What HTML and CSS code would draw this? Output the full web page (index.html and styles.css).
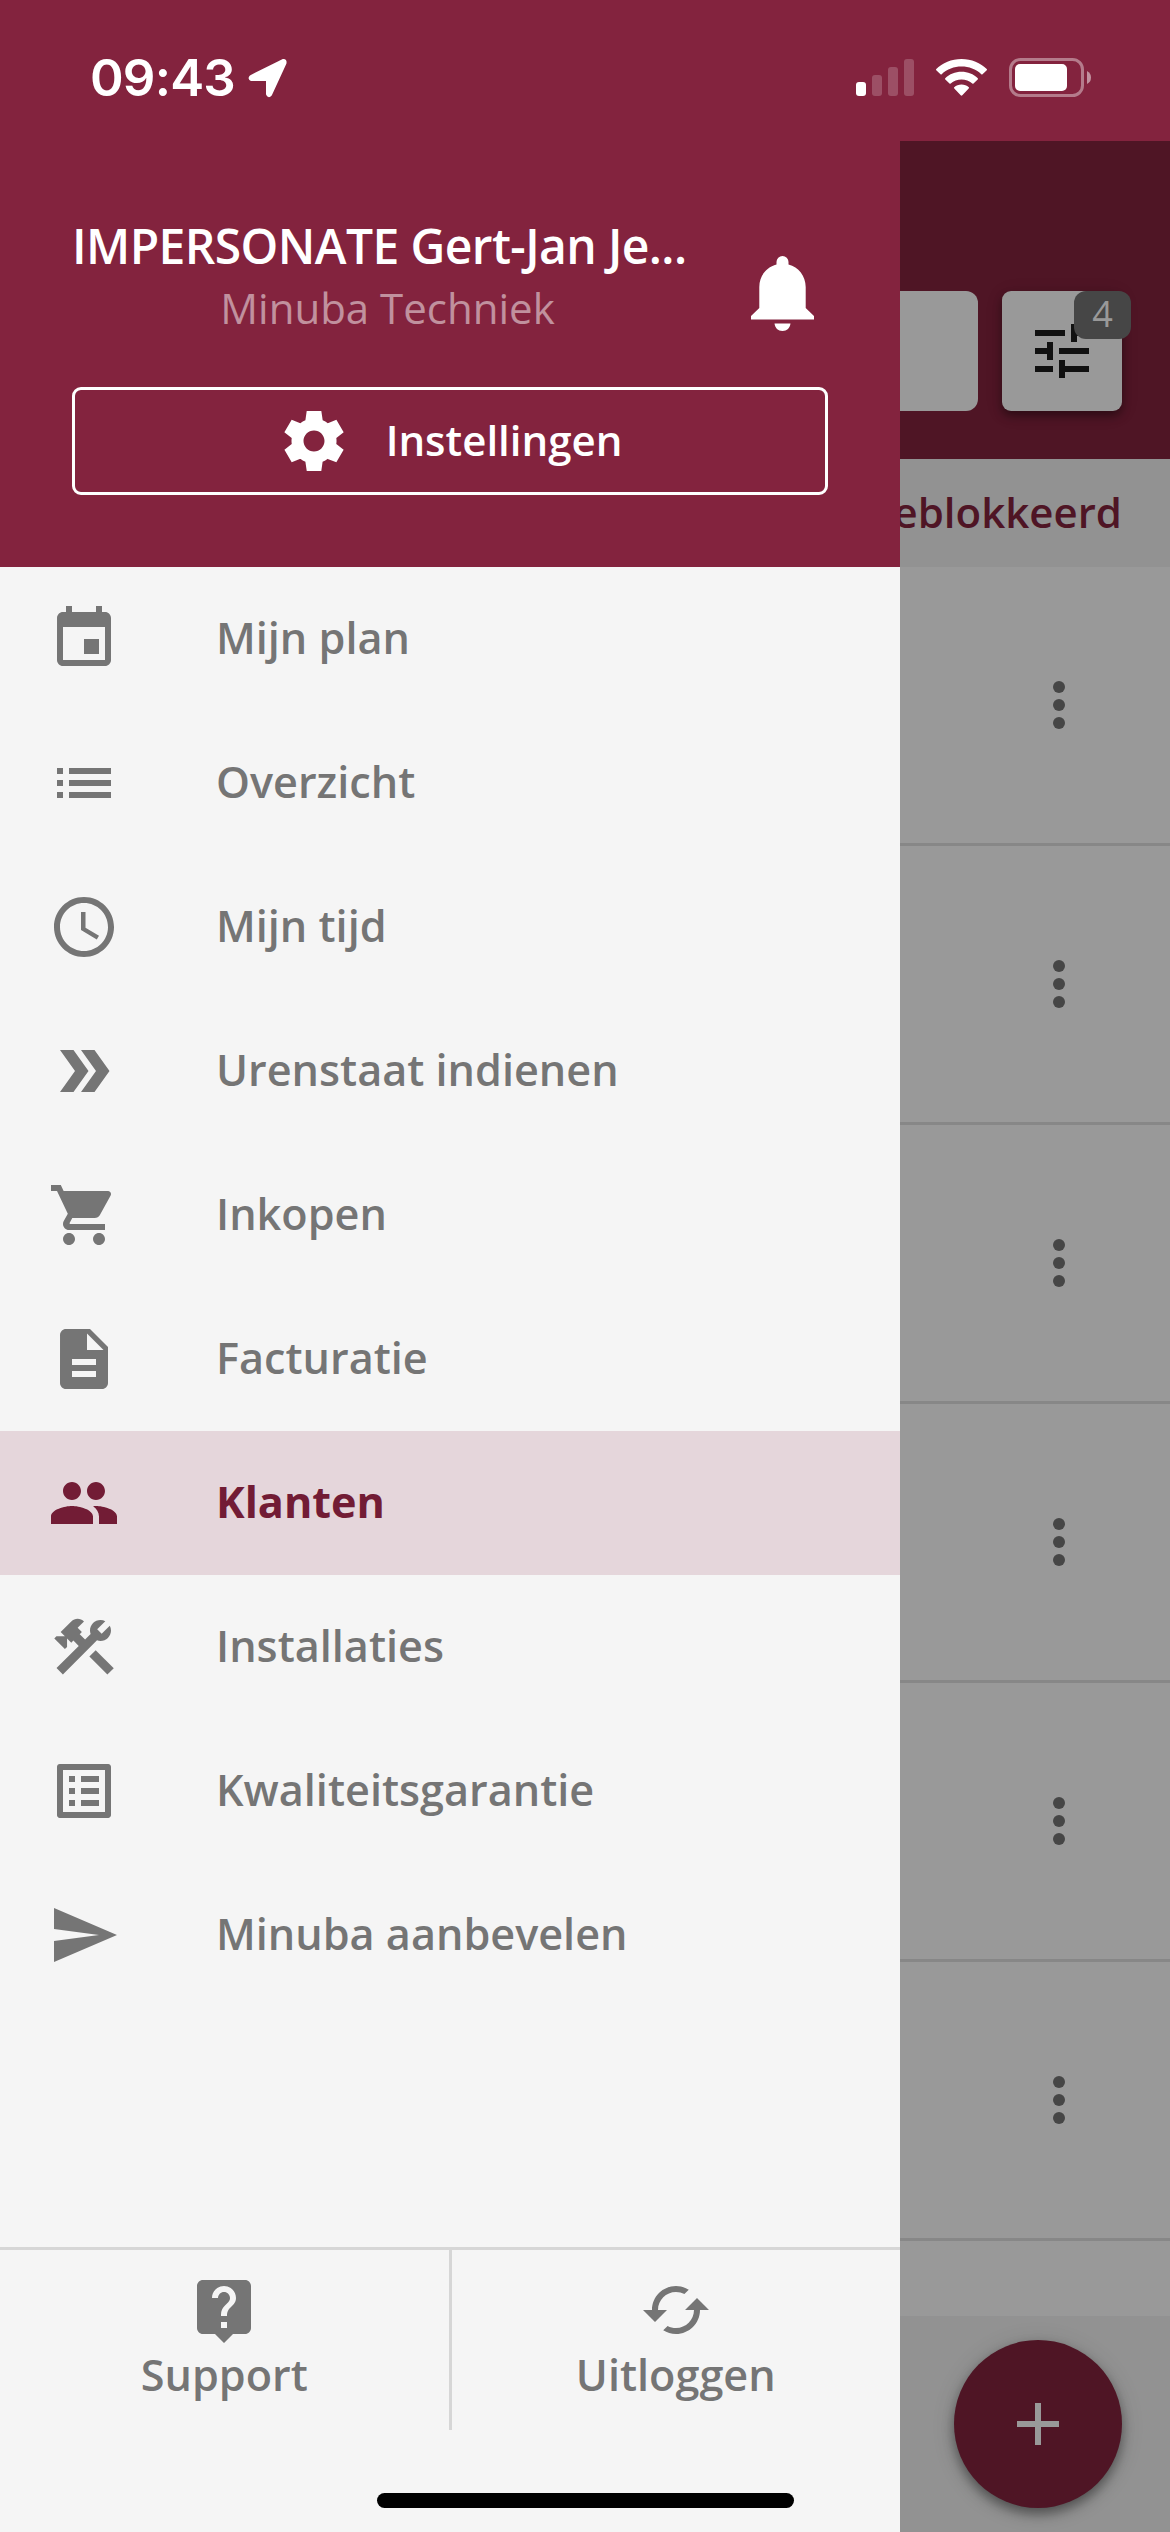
FILE: index.html
```html
<!DOCTYPE html>
<html lang="nl">
<head>
<meta charset="utf-8">
<title>Minuba – Klanten</title>
<link rel="stylesheet" href="styles.css">
</head>
<body>
<div class="screen">
  <header class="status">
    <div class="status-left">
      <span class="clock">09:43</span>
      <svg class="location" viewBox="0 0 39 40"><path d="M3 18.5 35 2.5Q37.5 2 37 5L22.5 36.500Q20.500 39 19.500 36V21.500H3.500Q1 20.500 3 18.500Z" fill="#fff" stroke="#fff" stroke-width="3" stroke-linejoin="round"/></svg>
    </div>
    <div class="status-right">
      <svg class="signal" viewBox="0 0 58 37" fill="#fff"><rect x="0" y="23" width="10" height="14" rx="3"/><g opacity=".2"><rect x="16" y="16" width="10" height="21" rx="3"/><rect x="32" y="8" width="10" height="29" rx="3"/><rect x="48" y="0" width="10" height="37" rx="3"/></g></svg>
      <svg class="wifi" viewBox="0 0 51 37" fill="#fff"><path d="M25.500 0C35.500 0 44.500 3.800 51 10.200Q51 11 50.500 11.500L46.500 15.300Q45.800 15.700 45.300 15.200C39.800 10.200 33 7.600 25.500 7.600S11.200 10.200 5.700 15.200Q5.200 15.700 4.500 15.300L.5 11.500Q0 11 0 10.200C6.500 3.800 15.500 0 25.500 0Z"/><path d="M25.500 12.800C31.800 12.800 37.500 15.200 41.800 19.200Q42.200 19.900 41.700 20.400L37.500 24.500Q36.900 24.900 36.300 24.400C33.300 21.800 29.600 20.400 25.500 20.400S17.700 21.800 14.700 24.400Q14.100 24.900 13.500 24.500L9.300 20.400Q8.800 19.900 9.200 19.200C13.500 15.200 19.200 12.800 25.500 12.800Z"/><path d="M25.500 25.600C28.300 25.600 30.800 26.600 32.800 28.200Q33.300 28.900 32.700 29.500L26.300 36.300Q25.500 37.100 24.700 36.300L18.300 29.500Q17.700 28.900 18.200 28.200C20.200 26.600 22.700 25.600 25.500 25.600Z"/></svg>
      <svg class="battery" viewBox="0 0 82 39" fill="#fff"><rect x="1.500" y="1.500" width="72" height="36" rx="10" fill="none" stroke="#fff" stroke-width="3" opacity=".4"/><rect x="6" y="6" width="52" height="27" rx="5"/><path d="M78 13Q82 15 82 19.500T78 26Z" opacity=".5"/></svg>
    </div>
  </header>

  <div class="body">
    <aside class="drawer">
      <div class="profile">
        <div class="profile-row">
          <div class="profile-names">
            <div class="user">IMPERSONATE Gert-Jan Je...</div>
            <div class="company">Minuba Techniek</div>
          </div>
          <svg class="bell" viewBox="0 0 63 75" fill="#fff"><path d="M25.500 8.500V6a6 6 0 0 1 12 0V8.500C47.500 11 54.700 20 54.700 31V52L63 60V63.500H0V60L8.300 52V31C8.300 20 15.500 11 25.500 8.500ZM23.500 67.500H39.500C39 72 36 75 31.500 75S24 72 23.500 67.500Z"/></svg>
        </div>
        <div class="settings">
          <svg class="icon" viewBox="0 0 24 24"><path d="M19.440 12.990l-.01.020c.04-.33.08-.67.08-1.010 0-.34-.03-.66-.07-.99l.01.020 2.440-1.920-2.430-4.220-2.870 1.160.01.010c-.52-.4-1.090-.74-1.710-1h.01L14.440 2H9.570l-.44 3.070h.01c-.62.26-1.190.6-1.710 1l.01-.01-2.880-1.170-2.440 4.220 2.440 1.920.01-.02c-.04.33-.07.65-.07.99 0 .34.03.68.08 1.010l-.01-.02-2.100 1.650-.33.26 2.430 4.200 2.880-1.150-.02-.04c.53.41 1.100.75 1.730 1.010h-.03L9.580 22h4.850s.03-.18.06-.42l.38-2.650h-.01c.62-.26 1.200-.6 1.730-1.010l-.02.040 2.880 1.150 2.430-4.200s-.14-.12-.33-.26l-2.110-1.660zM12 15.500c-1.930 0-3.500-1.570-3.500-3.500s1.570-3.500 3.500-3.500 3.500 1.570 3.500 3.500-1.570 3.500-3.500 3.500z"/></svg>
          <span class="settings-label">Instellingen</span>
        </div>
      </div>

      <nav class="menu">
        <div class="item"><svg class="icon" viewBox="0 0 24 24"><path d="M17 12h-5v5h5v-5zM16 1v2H8V1H6v2H5c-1.110 0-1.990.9-1.990 2L3 19c0 1.100.89 2 2 2h14c1.100 0 2-.9 2-2V5c0-1.100-.9-2-2-2h-1V1h-2zm3 18H5V8h14v11z"/></svg><span>Mijn plan</span></div>
        <div class="item"><svg class="icon" viewBox="0 0 24 24"><path d="M3 13h2v-2H3v2zm0 4h2v-2H3v2zm0-8h2V7H3v2zm4 4h14v-2H7v2zm0 4h14v-2H7v2zM7 7v2h14V7H7z"/></svg><span>Overzicht</span></div>
        <div class="item"><svg class="icon" viewBox="0 0 24 24"><path d="M11.990 2C6.470 2 2 6.480 2 12s4.470 10 9.990 10C17.520 22 22 17.520 22 12S17.520 2 11.990 2zM12 20c-4.420 0-8-3.580-8-8s3.580-8 8-8 8 3.580 8 8-3.580 8-8 8zm.5-13H11v6l5.250 3.150.75-1.230-4.500-2.670V7z"/></svg><span>Mijn tijd</span></div>
        <div class="item"><svg class="icon" viewBox="0 0 24 24"><path d="M15.500 5H11l5 7-5 7h4.500l5-7zM8.500 5H4l5 7-5 7h4.500l5-7z"/></svg><span>Urenstaat indienen</span></div>
        <div class="item"><svg class="icon" viewBox="0 0 24 24"><path d="M7 18c-1.100 0-1.990.9-1.990 2S5.900 22 7 22s2-.9 2-2-.9-2-2-2zM1 2v2h2l3.600 7.590-1.350 2.450c-.16.28-.25.61-.25.96 0 1.100.9 2 2 2h12v-2H7.420c-.14 0-.25-.11-.25-.25l.03-.12.9-1.630h7.450c.75 0 1.410-.41 1.750-1.030l3.580-6.490c.08-.14.12-.31.12-.48 0-.55-.45-1-1-1H5.210l-.94-2H1zm16 16c-1.100 0-1.990.9-1.990 2s.89 2 1.990 2 2-.9 2-2-.9-2-2-2z"/></svg><span>Inkopen</span></div>
        <div class="item"><svg class="icon" viewBox="0 0 24 24"><path d="M14 2H6c-1.100 0-1.990.9-1.990 2L4 20c0 1.100.89 2 1.990 2H18c1.100 0 2-.9 2-2V8l-6-6zm2 16H8v-2h8v2zm0-4H8v-2h8v2zm-3-5V3.500L18.500 9H13z"/></svg><span>Facturatie</span></div>
        <div class="item active"><svg class="icon" viewBox="0 0 24 24"><path d="M16 11c1.660 0 2.990-1.340 2.990-3S17.660 5 16 5c-1.660 0-3 1.340-3 3s1.340 3 3 3zm-8 0c1.660 0 2.990-1.340 2.990-3S9.660 5 8 5C6.340 5 5 6.340 5 8s1.340 3 3 3zm0 2c-2.330 0-7 1.170-7 3.500V19h14v-2.500c0-2.330-4.670-3.500-7-3.500zm8 0c-.29 0-.62.02-.97.05 1.160.84 1.970 1.970 1.970 3.450V19h6v-2.500c0-2.330-4.670-3.500-7-3.500z"/></svg><span>Klanten</span></div>
        <div class="item"><svg class="icon" viewBox="0 0 24 24"><path d="M13.783 15.172l2.121-2.121 6.010 6.010-2.121 2.121z"/><path d="M17.500 10c1.930 0 3.500-1.570 3.500-3.500 0-.58-.16-1.120-.41-1.600l-2.700 2.700-1.490-1.490 2.700-2.700c-.48-.25-1.020-.41-1.600-.41C15.570 3 14 4.570 14 6.500c0 .41.08.8.21 1.160l-1.850 1.850-1.780-1.780.71-.71-1.410-1.410L12 3.490c-1.170-1.170-3.070-1.170-4.240 0L4.220 7.030l1.410 1.410H2.810l-.71.71 3.540 3.540.71-.71V9.150l1.410 1.410.71-.71 1.780 1.780-7.410 7.410 2.120 2.120L16.340 9.790c.36.13.75.21 1.160.21z"/></svg><span>Installaties</span></div>
        <div class="item"><svg class="icon" viewBox="0 0 24 24"><path d="M19 5v14H5V5h14m1.100-2H3.900c-.5 0-.9.4-.9.9v16.200c0 .4.4.9.9.9h16.200c.4 0 .9-.5.9-.9V3.900c0-.5-.5-.9-.9-.9zM11 7h6v2h-6V7zm0 4h6v2h-6v-2zm0 4h6v2h-6zM7 7h2v2H7zm0 4h2v2H7zm0 4h2v2H7z"/></svg><span>Kwaliteitsgarantie</span></div>
        <div class="item"><svg class="icon" viewBox="0 0 24 24"><path d="M2.010 21L23 12 2.010 3 2 10l15 2-15 2z"/></svg><span>Minuba aanbevelen</span></div>
      </nav>

      <footer class="drawer-footer">
        <div class="action"><svg class="icon" viewBox="0 0 24 24"><path d="M19 2H5c-1.110 0-2 .9-2 2v14c0 1.100.89 2 2 2h4l3 3 3-3h4c1.100 0 2-.9 2-2V4c0-1.100-.9-2-2-2zm-6 16h-2v-2h2v2zm2.070-7.750l-.9.92C13.450 11.900 13 12.500 13 14h-2v-.5c0-1.100.45-2.100 1.170-2.830l1.240-1.260c.37-.36.59-.86.59-1.410 0-1.100-.9-2-2-2s-2 .9-2 2H8c0-2.210 1.790-4 4-4s4 1.790 4 4c0 .88-.36 1.680-.93 2.250z"/></svg><span>Support</span></div>
        <div class="divider"></div>
        <div class="action"><svg class="icon" viewBox="0 0 24 24"><path d="M19 8l-4 4h3c0 3.310-2.690 6-6 6-1.010 0-1.970-.25-2.800-.7l-1.460 1.460C8.970 19.540 10.430 20 12 20c4.420 0 8-3.580 8-8h3l-4-4zM6 12c0-3.310 2.690-6 6-6 1.010 0 1.970.25 2.800.7l1.460-1.460C15.030 4.460 13.570 4 12 4c-4.420 0-8 3.580-8 8H1l4 4 4-4H6z"/></svg><span>Uitloggen</span></div>
      </footer>
    </aside>

    <main class="app">
      <div class="toolbar">
        <div class="search"></div>
        <div class="filter">
          <svg class="icon" viewBox="0 0 24 24"><path d="M3 17v2h6v-2H3zM3 5v2h10V5H3zm10 16v-2h8v-2h-8v-2h-2v6h2zM7 9v2H3v2h4v2h2V9H7zm14 4v-2H11v2h10zm-6-4h2V7h4V5h-4V3h-2v6z"/></svg>
          <span class="badge">4</span>
        </div>
      </div>
      <div class="tabs"><span>Geblokkeerd</span></div>
      <div class="list">
        <div class="row"><svg class="icon" viewBox="0 0 24 24"><circle cx="12" cy="6" r="2"/><circle cx="12" cy="12" r="2"/><circle cx="12" cy="18" r="2"/></svg></div>
        <div class="row"><svg class="icon" viewBox="0 0 24 24"><circle cx="12" cy="6" r="2"/><circle cx="12" cy="12" r="2"/><circle cx="12" cy="18" r="2"/></svg></div>
        <div class="row"><svg class="icon" viewBox="0 0 24 24"><circle cx="12" cy="6" r="2"/><circle cx="12" cy="12" r="2"/><circle cx="12" cy="18" r="2"/></svg></div>
        <div class="row"><svg class="icon" viewBox="0 0 24 24"><circle cx="12" cy="6" r="2"/><circle cx="12" cy="12" r="2"/><circle cx="12" cy="18" r="2"/></svg></div>
        <div class="row"><svg class="icon" viewBox="0 0 24 24"><circle cx="12" cy="6" r="2"/><circle cx="12" cy="12" r="2"/><circle cx="12" cy="18" r="2"/></svg></div>
        <div class="row"><svg class="icon" viewBox="0 0 24 24"><circle cx="12" cy="6" r="2"/><circle cx="12" cy="12" r="2"/><circle cx="12" cy="18" r="2"/></svg></div>
      </div>
      <div class="bottom-bar">
        <div class="fab"><svg class="icon" viewBox="0 0 24 24"><path d="M19 13h-6v6h-2v-6H5v-2h6V5h2v6h6v2z"/></svg></div>
      </div>
    </main>
  </div>
  <div class="home-indicator"></div>
</div>
</body>
</html>
```

FILE: styles.css
```css
* { box-sizing: border-box; }

body {
  margin: 0;
  font-family: "Open Sans", "Noto Sans", sans-serif;
  font-size: 42px;
  font-weight: 600;
  line-height: 1.36;
}

svg { display: block; flex: none; }

.screen {
  position: relative;
  display: flex;
  flex-direction: column;
  width: 1170px;
  height: 2532px;
  overflow: hidden;
  background: #f5f5f5;
}

.icon {
  width: 72px;
  height: 72px;
  fill: currentColor;
}

/* status bar */
.status {
  display: flex;
  justify-content: space-between;
  align-items: flex-start;
  height: 141px;
  padding: 58px 79px 0 90px;
  background: #83233e;
  color: #fff;
}
.status-left { display: flex; align-items: flex-start; gap: 14px; }
.clock {
  width: 144px;
  font-family: Inter, sans-serif;
  font-size: 51px;
  line-height: 39px;
  letter-spacing: -.8px;
  white-space: nowrap;
}
.location { width: 39px; height: 40px; }
.status-right { display: flex; }
.signal { width: 58px; height: 37px; margin: 1px 22px 0 0; }
.wifi { width: 51px; height: 37px; margin: 1px 22px 0 0; }
.battery { width: 82px; height: 39px; }

.body { display: flex; flex: 1; min-height: 0; }

/* drawer */
.drawer {
  display: flex;
  flex-direction: column;
  width: 900px;
  background: #f5f5f5;
  color: #757575;
}
.profile {
  display: flex;
  flex-direction: column;
  justify-content: space-between;
  height: 426px;
  padding: 72px 72px;
  background: #83233e;
  color: #fff;
}
.profile-row { display: flex; justify-content: space-between; }
.profile-names { width: 631px; text-align: center; }
.user {
  font-size: 48px;
  line-height: 66px;
  letter-spacing: -.6px;
  text-align: left;
  white-space: nowrap;
}
.company {
  font-size: 42px;
  font-weight: 400;
  line-height: 58px;
  color: rgba(255, 255, 255, .5);
}
.bell { width: 63px; height: 75px; margin: 43px 14px 0 0; }
.settings {
  display: flex;
  justify-content: center;
  align-items: center;
  gap: 36px;
  height: 108px;
  border: 3px solid #fff;
  border-radius: 9px;
}
.settings-label { padding-bottom: 2px; }

.menu { flex: 1; }
.item {
  display: flex;
  align-items: center;
  gap: 96px;
  height: 144px;
  padding-left: 48px;
  font-size: 43.2px;
}
.item span { padding-bottom: 1px; }
.item.active {
  background: #e5d6db;
  color: #721c35;
  font-weight: 700;
}

.drawer-footer {
  display: flex;
  align-items: flex-start;
  height: 285px;
  border-top: 3px solid #d6d6d6;
}
.divider { width: 3px; height: 180px; background: #d6d6d6; }
.action {
  display: flex;
  flex: 1;
  flex-direction: column;
  align-items: center;
  padding-top: 24px;
  font-size: 43.2px;
  line-height: 57px;
}

/* dimmed page behind the drawer */
.app {
  display: flex;
  flex-direction: column;
  width: 270px;
  overflow: hidden;
  background: #999;
  color: #464646;
}
.toolbar {
  display: flex;
  gap: 24px;
  height: 318px;
  padding-top: 150px;
  background: #4f1525;
}
.search {
  width: 78px;
  height: 120px;
  border-radius: 0 12px 12px 0;
  background: #999;
}
.filter {
  position: relative;
  display: flex;
  justify-content: center;
  align-items: center;
  width: 120px;
  height: 120px;
  border-radius: 9px;
  background: #999;
  color: #111;
  box-shadow: 0 5px 9px rgba(0, 0, 0, .35), 0 3px 18px rgba(0, 0, 0, .12);
}
.badge {
  position: absolute;
  top: 0;
  right: -9px;
  width: 57px;
  height: 48px;
  border-radius: 12px;
  background: #464646;
  color: #999;
  font-size: 36px;
  font-weight: 400;
  line-height: 46px;
  text-align: center;
}
.tabs {
  display: flex;
  justify-content: flex-end;
  align-items: center;
  height: 108px;
  padding: 0 48px 2px 0;
  background: #929292;
  color: #4f1525;
}
.list { flex: 1; }
.row {
  display: flex;
  justify-content: flex-end;
  align-items: center;
  height: 279px;
  padding-right: 75px;
  border-bottom: 3px solid #878787;
}
.bottom-bar {
  display: flex;
  justify-content: flex-end;
  height: 216px;
  padding: 24px 48px;
  background: #929292;
}
.fab {
  display: flex;
  justify-content: center;
  align-items: center;
  width: 168px;
  height: 168px;
  border-radius: 50%;
  background: #4f1525;
  color: #999;
  box-shadow: 0 6px 12px rgba(0, 0, 0, .4), 0 3px 24px rgba(0, 0, 0, .12);
}

.home-indicator {
  position: absolute;
  left: 377px;
  bottom: 24px;
  width: 417px;
  height: 15px;
  border-radius: 8px;
  background: #000;
}
```
